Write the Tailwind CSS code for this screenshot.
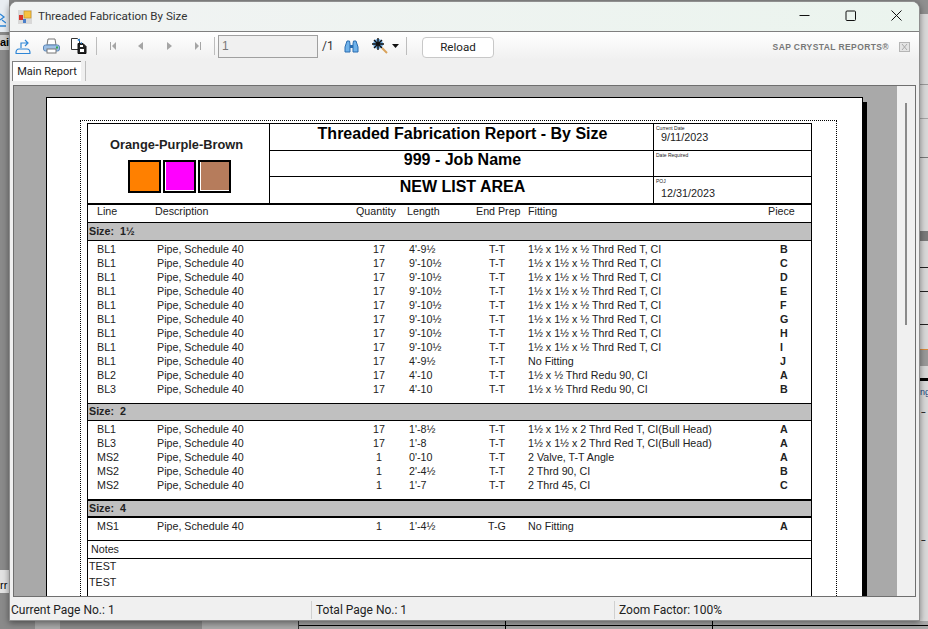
<!DOCTYPE html>
<html lang="en">
<head>
    <meta charset="UTF-8">
    <title>Threaded Fabrication By Size</title>
    <script src="https://cdn.jsdelivr.net/npm/@tailwindcss/browser@4"></script>
</head>
<body class="relative w-[928px] h-[629px] overflow-hidden bg-[#8a8a8a] font-['Liberation_Sans',sans-serif] text-black">
    <!-- Desktop behind the window: left edge -->
    <div class="absolute left-0 top-0 w-[9px] h-[32px] bg-[#e8edf2]">
        <svg class="mt-[13px] w-[6px] h-[14px]" viewBox="0 0 6 14" fill="none"><path d="M0 13h6M2 7l4 3M0 1l4 3-4 3" stroke="#2e86d6" stroke-width="1.300"/></svg>
    </div>
    <div class="absolute left-0 top-[35px] w-[9px] h-[15px] bg-[#cfcfcf] text-[11px] leading-[15px] font-bold">ai</div>
    <div class="absolute left-0 top-[570px] w-[9px] h-[23px] bg-[#e2e2e2] text-[11px] leading-[30px]">rr</div>

    <!-- Desktop behind the window: right edge -->
    <div class="absolute left-[920px] top-0 w-[8px] h-[14px] bg-[#8f8f8f]"></div>
    <div class="absolute left-[920px] top-[14px] w-[8px] h-[615px] bg-[#d8d8d8]"></div>
    <div class="absolute left-[920px] top-[84px] w-[8px] h-px bg-[#9a9a9a]"></div>
    <div class="absolute left-[920px] top-[118px] w-[8px] h-px bg-[#a5a5a5]"></div>
    <div class="absolute left-[920px] top-[157px] w-[8px] h-px bg-[#777]"></div>
    <div class="absolute left-[920px] top-[231px] w-[8px] h-[10px] bg-[#7a7a7a]"></div>
    <div class="absolute left-[920px] top-[267px] w-[8px] h-px bg-[#222]"></div>
    <div class="absolute left-[920px] top-[291px] w-[8px] h-px bg-[#222]"></div>
    <div class="absolute left-[920px] top-[324px] w-[8px] h-px bg-[#222]"></div>
    <div class="absolute left-[920px] top-[349px] w-[8px] h-[17px] bg-[#999] border-t border-[#d98a3a]"></div>
    <div class="absolute left-[920px] top-[378px] w-[8px] h-[3px] bg-black"></div>
    <div class="absolute left-[920px] top-[385px] text-[9px] leading-[14px] text-[#1b3f80]">ng</div>
    <div class="absolute left-[921px] top-[408px] text-[8px] leading-[10px] font-bold">~</div>
    <div class="absolute left-[921px] top-[536px] text-[8px] leading-[10px] font-bold">~</div>

    <!-- Desktop behind the window: bottom edge -->
    <div class="absolute left-[35px] top-[621px] w-[25px] h-[8px] bg-[#a8a8a8]"></div>
    <div class="absolute left-[202px] top-[621px] w-[97px] h-[8px] bg-[#a8a8a8] border-r border-[#333]"></div>
    <div class="absolute left-[299px] top-[621px] w-[629px] h-[8px] bg-[#a8a8a8]"></div>
    <div class="absolute left-[299px] top-[625px] w-[629px] h-px bg-black"></div>
    <div class="absolute left-[505px] top-[621px] w-px h-[8px] bg-black"></div>
    <div class="absolute left-[712px] top-[621px] w-px h-[8px] bg-black"></div>

    <!-- Window -->
    <div class="absolute left-[9px] top-[1px] w-[911px] h-[620px] flex flex-col bg-[#f0f0f0] border border-[#8f8f8f] rounded-t-lg overflow-hidden shadow-[0_2px_6px_rgba(0,0,0,0.45)]">
        <!-- Title bar -->
        <div class="h-[30px] shrink-0 flex items-center pl-[8px] bg-gradient-to-r from-[#f1f3f3] to-[#ebf4ee] border-b border-[#7f7f7f]">
            <svg class="w-[14px] h-[14px]" viewBox="0 0 14 14">
                <rect width="14" height="14" fill="#d8d8d8"/>
                <rect x="6" y="1" width="7" height="7" fill="#f5c242" stroke="#c08a20" stroke-width=".6"/>
                <rect x="1" y="5" width="4" height="5" fill="#d9342b"/>
                <rect x="5" y="9" width="3" height="4" fill="#4a7fc9"/>
            </svg>
            <span class="ml-[6px] font-['Roboto',sans-serif] text-[11.600px] text-[#333]">Threaded Fabrication By Size</span>
            <div class="ml-auto flex items-center -mt-[2px]">
                <div class="w-[46px] h-[28px] flex items-center justify-center">
                    <svg class="w-[11px] h-[11px]" viewBox="0 0 11 11"><path d="M0.500 5.500h10" stroke="#111" fill="none"/></svg>
                </div>
                <div class="w-[46px] h-[28px] flex items-center justify-center">
                    <svg class="w-[11px] h-[11px]" viewBox="0 0 11 11"><rect x="1" y="1" width="9.500" height="9.500" rx="1" stroke="#111" fill="none"/></svg>
                </div>
                <div class="w-[46px] h-[28px] flex items-center justify-center">
                    <svg class="w-[11px] h-[11px]" viewBox="0 0 11 11"><path d="M0.500 0.500l10 10M10.500 0.500l-10 10" stroke="#111" fill="none"/></svg>
                </div>
            </div>
        </div>

        <!-- Toolbar -->
        <div class="h-[28px] shrink-0 flex items-center pl-[5px] bg-gradient-to-b from-white to-[#f0f0f0]">
            <svg class="w-[16px] h-[15px]" viewBox="0 0 16 15" fill="none">
                <path d="M.5 14.500h15M1 14c0-2 1-4 3-4h8c2 0 3 2 3 4" stroke="#2e86d6" stroke-width="1.200"/>
                <path d="M6 9V4h6M10 1l3 3-3 3" stroke="#2e86d6" stroke-width="1.200"/>
            </svg>
            <svg class="ml-[12px] w-[17px] h-[16px]" viewBox="0 0 17 16" fill="none">
                <path d="M5 1h7l1 6H4z" fill="#fff" stroke="#777"/>
                <rect x=".5" y="7" width="16" height="6" rx="2" fill="#9dbfe4" stroke="#5b86b8"/>
                <rect x="4" y="11" width="9" height="4" fill="#fff" stroke="#777"/>
                <rect x="13" y="8.500" width="2" height="2" fill="#2fa84f"/>
            </svg>
            <svg class="ml-[11px] w-[16px] h-[18px]" viewBox="0 0 16 18" fill="none">
                <path d="M.5 1.500h6l2 2v9h-8z" fill="#fff" stroke="#333"/>
                <path d="M7 6.500h5l3 3v7H7z" fill="#222" stroke="#111"/>
                <rect x="9" y="8" width="3" height="2" fill="#fff"/>
                <rect x="9" y="12" width="4" height="3" fill="#fff"/>
                <path d="M6 3l3-1.500v3zM9 6l2-1v2z" fill="#2e86d6"/>
            </svg>
            <div class="ml-[9px] w-px h-[18px] bg-[#bdbdbd]"></div>
            <svg class="ml-[12px] w-[8px] h-[10px]" viewBox="0 0 8 10"><path d="M1 1v8h1V1zM7 1L3 5l4 4z" fill="#a5a5a5"/></svg>
            <svg class="ml-[20px] w-[7px] h-[10px]" viewBox="0 0 7 10"><path d="M6 1L1 5l5 4z" fill="#a5a5a5"/></svg>
            <svg class="ml-[22px] w-[7px] h-[10px]" viewBox="0 0 7 10"><path d="M1 1l5 4-5 4z" fill="#a5a5a5"/></svg>
            <svg class="ml-[21px] w-[8px] h-[10px]" viewBox="0 0 8 10"><path d="M1 1l4 4-4 4zM6 1v8h1V1z" fill="#a5a5a5"/></svg>
            <div class="ml-[12px] w-px h-[18px] bg-[#bdbdbd]"></div>
            <div class="ml-[3px] w-[100px] h-[23px] border border-[#a0a0a0] bg-[#f0f0f0] text-[#777] text-[12px] leading-[20px] pl-[3px]">1</div>
            <span class="ml-[4px] w-[10px] text-[12px] text-[#333] font-['Roboto',sans-serif]">/1</span>
            <svg class="ml-[12px] w-[15px] h-[13px]" viewBox="0 0 15 13" fill="none">
                <path d="M3 1h2.500l.5 3v8H1v-5z" fill="#6fb2ea" stroke="#2a6db0"/>
                <path d="M12 1H9.500L9 4v8h5V7z" fill="#6fb2ea" stroke="#2a6db0"/>
                <path d="M6 5h3v3H6z" fill="#2a6db0"/>
            </svg>
            <svg class="ml-[13px] w-[16px] h-[16px]" viewBox="0 0 16 16" fill="none">
                <circle cx="6" cy="6" r="5" fill="#6ba9df"/>
                <path d="M2 2l8 8M10 2l-8 8M6 0v12M0 6h12" stroke="#111" stroke-width="1.400"/>
                <path d="M10 10l5 5" stroke="#d9a25a" stroke-width="2"/>
            </svg>
            <svg class="ml-[4px] w-[7px] h-[4px]" viewBox="0 0 7 4"><path d="M0 0h7L3.500 4z" fill="#111"/></svg>
            <div class="ml-[7px] w-px h-[18px] bg-[#bdbdbd]"></div>
            <div class="ml-[15px] mt-[2px] w-[72px] h-[21px] border border-[#c8c8c8] rounded-[4px] bg-white text-center text-[11.600px] leading-[19px] font-['Roboto',sans-serif] text-[#222]">Reload</div>
            <span class="ml-auto mt-[2px] font-bold text-[8.500px] tracking-[0.400px] text-[#777]">SAP CRYSTAL REPORTS&#174;</span>
            <svg class="ml-[10px] mr-[9px] mt-[2px] w-[11px] h-[10px]" viewBox="0 0 11 10" fill="none">
                <rect x=".5" y=".5" width="10" height="9" fill="#e4e4e4" stroke="#b5b5b5"/>
                <path d="M3 2l5 6M8 2L3 8" stroke="#aaa"/>
            </svg>
        </div>

        <!-- Tab strip -->
        <div class="h-[25px] shrink-0 flex items-start pt-[1px] pl-[2px]">
            <div class="w-[69px] h-[20px] border-l border-t border-[#7f7f7f] bg-white text-[11px] font-['Roboto',sans-serif] leading-[20px] text-center text-[#222]">Main Report</div>
            <div class="ml-[4px] w-px h-[20px] bg-[#bdbdbd]"></div>
        </div>

        <!-- Report viewer -->
        <div class="mx-[3px] h-[512px] shrink-0 flex border border-[#6f6f6f] bg-[#a9a9a9] overflow-hidden">
            <div class="relative w-[883px] overflow-hidden pl-[32px] pt-[11px]">
                <div class="absolute left-[848px] top-[16px] w-[5px] h-[500px] bg-black"></div>
                <!-- Page -->
                <div class="relative w-[817px] h-[520px] bg-white border-l border-t border-r border-black pl-[33px] pt-[22px]">
                    <div class="w-[757px] h-[500px] border-l border-t border-r border-dotted border-black pl-[6px] pt-[2px]">
                        <div class="w-[725px] border-l border-r border-black text-[10.700px] leading-[14px] text-[#222]">
                            <!-- Report header -->
                            <div class="flex h-[82px] border-t border-b-[2px] border-black">
                                <div class="w-[181px] shrink-0 flex flex-col items-center pt-[13px]">
                                    <div class="-ml-[4px] text-[12.800px] font-bold leading-[15px]">Orange-Purple-Brown</div>
                                    <div class="mt-[8px] ml-[2px] flex gap-[2px]">
                                        <div class="w-[33px] h-[33px] border-[2px] border-black bg-[#ff8000]"></div>
                                        <div class="w-[33px] h-[33px] border-[2px] border-black bg-[#ff00ff] shadow-[inset_1px_-1px_0_#fff]"></div>
                                        <div class="w-[33px] h-[33px] border-[2px] border-black bg-[#b67c5c] shadow-[inset_1px_-1px_0_#fff]"></div>
                                    </div>
                                </div>
                                <div class="w-[384px] shrink-0 flex flex-col border-l border-black text-center font-bold text-black">
                                    <div class="h-[27px] pl-[2px] border-b border-black text-[16px] leading-[20px]">Threaded Fabrication Report - By Size</div>
                                    <div class="h-[26px] pl-[2px] border-b border-black text-[16px] leading-[18px]">999 - Job Name</div>
                                    <div class="pl-[2px] text-[16px] leading-[19px]">NEW LIST AREA</div>
                                </div>
                                <div class="flex-1 flex flex-col border-l border-black">
                                    <div class="h-[27px] border-b border-black">
                                        <div class="text-[5px] leading-[6px] pl-[2px] pt-[1px]">Current Date</div>
                                        <div class="text-[10.800px] leading-[13px] pl-[7px]">9/11/2023</div>
                                    </div>
                                    <div class="h-[26px] border-b border-black">
                                        <div class="text-[5px] leading-[6px] pl-[2px] pt-[1px]">Date Required</div>
                                    </div>
                                    <div>
                                        <div class="text-[5px] leading-[6px] pl-[2px] pt-[1px]">POJ</div>
                                        <div class="text-[10.800px] leading-[13px] pl-[7px] pt-[3px]">12/31/2023</div>
                                    </div>
                                </div>
                            </div>
                            <!-- Column headings -->
                            <div class="grid grid-cols-[58px_201px_51px_69px_52px_240px_45px] h-[17px] leading-[13px] pl-[9px]">
                                <div>Line</div><div>Description</div><div>Quantity</div><div>Length</div><div>End Prep</div><div>Fitting</div><div>Piece</div>
                            </div>

                            <div class="h-[19px] bg-[#c0c0c0] border-y border-black pl-[1px] font-bold leading-[16px]">Size:&nbsp; 1&#189;</div>
                            <div class="pt-[1px] pb-[7px]">
                                <div class="grid grid-cols-[60px_202px_40px_78px_40px_263px_30px] h-[14px] pl-[9px]"><div>BL1</div><div>Pipe, Schedule 40</div><div class="text-center">17</div><div class="pl-[10px]">4'-9&#189;</div><div class="text-center">T-T</div><div class="pl-[11px]">1&#189; x 1&#189; x &#189; Thrd Red T, CI</div><div class="font-bold">B</div></div>
                                <div class="grid grid-cols-[60px_202px_40px_78px_40px_263px_30px] h-[14px] pl-[9px]"><div>BL1</div><div>Pipe, Schedule 40</div><div class="text-center">17</div><div class="pl-[10px]">9'-10&#189;</div><div class="text-center">T-T</div><div class="pl-[11px]">1&#189; x 1&#189; x &#189; Thrd Red T, CI</div><div class="font-bold">C</div></div>
                                <div class="grid grid-cols-[60px_202px_40px_78px_40px_263px_30px] h-[14px] pl-[9px]"><div>BL1</div><div>Pipe, Schedule 40</div><div class="text-center">17</div><div class="pl-[10px]">9'-10&#189;</div><div class="text-center">T-T</div><div class="pl-[11px]">1&#189; x 1&#189; x &#189; Thrd Red T, CI</div><div class="font-bold">D</div></div>
                                <div class="grid grid-cols-[60px_202px_40px_78px_40px_263px_30px] h-[14px] pl-[9px]"><div>BL1</div><div>Pipe, Schedule 40</div><div class="text-center">17</div><div class="pl-[10px]">9'-10&#189;</div><div class="text-center">T-T</div><div class="pl-[11px]">1&#189; x 1&#189; x &#189; Thrd Red T, CI</div><div class="font-bold">E</div></div>
                                <div class="grid grid-cols-[60px_202px_40px_78px_40px_263px_30px] h-[14px] pl-[9px]"><div>BL1</div><div>Pipe, Schedule 40</div><div class="text-center">17</div><div class="pl-[10px]">9'-10&#189;</div><div class="text-center">T-T</div><div class="pl-[11px]">1&#189; x 1&#189; x &#189; Thrd Red T, CI</div><div class="font-bold">F</div></div>
                                <div class="grid grid-cols-[60px_202px_40px_78px_40px_263px_30px] h-[14px] pl-[9px]"><div>BL1</div><div>Pipe, Schedule 40</div><div class="text-center">17</div><div class="pl-[10px]">9'-10&#189;</div><div class="text-center">T-T</div><div class="pl-[11px]">1&#189; x 1&#189; x &#189; Thrd Red T, CI</div><div class="font-bold">G</div></div>
                                <div class="grid grid-cols-[60px_202px_40px_78px_40px_263px_30px] h-[14px] pl-[9px]"><div>BL1</div><div>Pipe, Schedule 40</div><div class="text-center">17</div><div class="pl-[10px]">9'-10&#189;</div><div class="text-center">T-T</div><div class="pl-[11px]">1&#189; x 1&#189; x &#189; Thrd Red T, CI</div><div class="font-bold">H</div></div>
                                <div class="grid grid-cols-[60px_202px_40px_78px_40px_263px_30px] h-[14px] pl-[9px]"><div>BL1</div><div>Pipe, Schedule 40</div><div class="text-center">17</div><div class="pl-[10px]">9'-10&#189;</div><div class="text-center">T-T</div><div class="pl-[11px]">1&#189; x 1&#189; x &#189; Thrd Red T, CI</div><div class="font-bold">I</div></div>
                                <div class="grid grid-cols-[60px_202px_40px_78px_40px_263px_30px] h-[14px] pl-[9px]"><div>BL1</div><div>Pipe, Schedule 40</div><div class="text-center">17</div><div class="pl-[10px]">4'-9&#189;</div><div class="text-center">T-T</div><div class="pl-[11px]">No Fitting</div><div class="font-bold">J</div></div>
                                <div class="grid grid-cols-[60px_202px_40px_78px_40px_263px_30px] h-[14px] pl-[9px]"><div>BL2</div><div>Pipe, Schedule 40</div><div class="text-center">17</div><div class="pl-[10px]">4'-10</div><div class="text-center">T-T</div><div class="pl-[11px]">1&#189; x &#189; Thrd Redu 90, CI</div><div class="font-bold">A</div></div>
                                <div class="grid grid-cols-[60px_202px_40px_78px_40px_263px_30px] h-[14px] pl-[9px]"><div>BL3</div><div>Pipe, Schedule 40</div><div class="text-center">17</div><div class="pl-[10px]">4'-10</div><div class="text-center">T-T</div><div class="pl-[11px]">1&#189; x &#189; Thrd Redu 90, CI</div><div class="font-bold">B</div></div>
                            </div>

                            <div class="h-[18px] bg-[#c0c0c0] border-y border-black pl-[1px] font-bold leading-[15px]">Size:&nbsp; 2</div>
                            <div class="pt-[1px] pb-[7px]">
                                <div class="grid grid-cols-[60px_202px_40px_78px_40px_263px_30px] h-[14px] pl-[9px]"><div>BL1</div><div>Pipe, Schedule 40</div><div class="text-center">17</div><div class="pl-[10px]">1'-8&#189;</div><div class="text-center">T-T</div><div class="pl-[11px]">1&#189; x 1&#189; x 2 Thrd Red T, CI(Bull Head)</div><div class="font-bold">A</div></div>
                                <div class="grid grid-cols-[60px_202px_40px_78px_40px_263px_30px] h-[14px] pl-[9px]"><div>BL3</div><div>Pipe, Schedule 40</div><div class="text-center">17</div><div class="pl-[10px]">1'-8</div><div class="text-center">T-T</div><div class="pl-[11px]">1&#189; x 1&#189; x 2 Thrd Red T, CI(Bull Head)</div><div class="font-bold">A</div></div>
                                <div class="grid grid-cols-[60px_202px_40px_78px_40px_263px_30px] h-[14px] pl-[9px]"><div>MS2</div><div>Pipe, Schedule 40</div><div class="text-center">1</div><div class="pl-[10px]">0'-10</div><div class="text-center">T-T</div><div class="pl-[11px]">2 Valve, T-T Angle</div><div class="font-bold">A</div></div>
                                <div class="grid grid-cols-[60px_202px_40px_78px_40px_263px_30px] h-[14px] pl-[9px]"><div>MS2</div><div>Pipe, Schedule 40</div><div class="text-center">1</div><div class="pl-[10px]">2'-4&#189;</div><div class="text-center">T-T</div><div class="pl-[11px]">2 Thrd 90, CI</div><div class="font-bold">B</div></div>
                                <div class="grid grid-cols-[60px_202px_40px_78px_40px_263px_30px] h-[14px] pl-[9px]"><div>MS2</div><div>Pipe, Schedule 40</div><div class="text-center">1</div><div class="pl-[10px]">1'-7</div><div class="text-center">T-T</div><div class="pl-[11px]">2 Thrd 45, CI</div><div class="font-bold">C</div></div>
                            </div>

                            <div class="h-[19px] bg-[#c0c0c0] border-y-[2px] border-black pl-[1px] font-bold leading-[15px]">Size:&nbsp; 4</div>
                            <div class="h-[23px] pt-[1px] border-b border-black">
                                <div class="grid grid-cols-[60px_202px_40px_78px_40px_263px_30px] h-[14px] pl-[9px]"><div>MS1</div><div>Pipe, Schedule 40</div><div class="text-center">1</div><div class="pl-[10px]">1'-4&#189;</div><div class="text-center">T-G</div><div class="pl-[11px]">No Fitting</div><div class="font-bold">A</div></div>
                            </div>
                            <div class="h-[18px] border-b border-black pl-[3px] leading-[17px]">Notes</div>
                            <div class="pl-[1px] h-[60px]">
                                <div class="-mt-[1px] leading-[16px]">TEST</div>
                                <div class="leading-[16px]">TEST</div>
                            </div>
                        </div>
                    </div>
                </div>
            </div>
            <!-- Scrollbar -->
            <div class="flex-1 bg-[#f0f0f0] flex justify-center pt-[17px]">
                <div class="w-[2px] h-[222px] bg-[#8a8a8a]"></div>
            </div>
        </div>

        <!-- Status bar -->
        <div class="flex-1 flex items-center pt-[2px] text-[12px] font-['Roboto',sans-serif] text-[#222]">
            <div class="w-[301px] pl-[1px]">Current Page No.: 1</div>
            <div class="w-[303px] pl-[4px] border-l border-[#d0d0d0]">Total Page No.: 1</div>
            <div class="pl-[4px] border-l border-[#d0d0d0]">Zoom Factor: 100%</div>
        </div>
    </div>
</body>
</html>
